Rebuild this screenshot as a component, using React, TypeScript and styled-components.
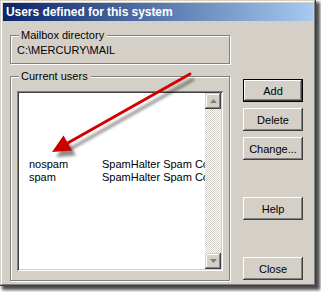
import React from "react";
import styled, { createGlobalStyle } from "styled-components";

const Global = createGlobalStyle`
  html, body { margin: 0; padding: 0; background: #ffffff; }
  body { font-family: "Liberation Sans", Arial, sans-serif; font-size: 11px; color: #000; }
`;

const Page = styled.div`
  position: relative;
  width: 321px;
  height: 292px;
  overflow: hidden;
`;

const Window = styled.div`
  position: relative;
  width: 316px;
  height: 286px;
  box-sizing: border-box;
  padding: 3px;
  background: #d4d0c8;
  box-shadow: inset -1px -1px #404040, inset 1px 1px #d4d0c8, inset -2px -2px #808080,
    inset 2px 2px #ffffff, 3px 3px 3px 1px rgba(0, 0, 0, 0.7);
  display: flex;
  flex-direction: column;
`;

const TitleBar = styled.div`
  height: 18px;
  line-height: 18px;
  padding-left: 3px;
  background: linear-gradient(to right, #0a246a, #a6caf0);
  color: #ffffff;
  font-weight: bold;
  font-size: 12px;
  letter-spacing: -0.05px;
  white-space: nowrap;
`;

const Body = styled.div`
  display: flex;
  flex-direction: row;
  padding-left: 7px;
`;

const LeftCol = styled.div`
  width: 221px;
  display: flex;
  flex-direction: column;
`;

const Group = styled.div<{ $h: number; $mt: number }>`
  position: relative;
  box-sizing: border-box;
  height: ${(p) => p.$h}px;
  margin-top: ${(p) => p.$mt}px;
  border: 1px solid #808080;
  box-shadow: inset 1px 1px #ffffff, 1px 1px #ffffff;
  width: 220px;
`;

const GroupLabel = styled.span`
  position: absolute;
  top: -7px;
  left: 8px;
  padding: 0 3px 0 2px;
  background: #d4d0c8;
  line-height: 13px;
`;

const MailboxValue = styled.div`
  padding: 8px 0 0 6px;
  line-height: 13px;
`;

const CurrentInner = styled.div`
  padding: 14px 0 0 6px;
`;

const ListBox = styled.div`
  box-sizing: border-box;
  width: 206px;
  height: 180px;
  padding: 2px;
  background: #ffffff;
  box-shadow: inset 1px 1px #808080, inset -1px -1px #ffffff, inset 2px 2px #404040,
    inset -2px -2px #d4d0c8;
  display: flex;
`;

const Items = styled.div`
  flex: 1;
  overflow: hidden;
  padding-top: 65px;
`;

const Row = styled.div`
  display: flex;
  height: 13px;
  line-height: 13px;
  white-space: nowrap;
`;

const NameCell = styled.span`
  width: 73px;
  padding-left: 10px;
  flex-shrink: 0;
`;

const DescCell = styled.span`
  overflow: hidden;
`;

const ScrollBar = styled.div`
  width: 16px;
  display: flex;
  flex-direction: column;
  justify-content: space-between;
  background: repeating-conic-gradient(#ffffff 0 25%, #d4d0c8 0 50%) 0 0 / 2px 2px;
`;

const ScrollBtn = styled.div`
  width: 16px;
  height: 16px;
  background: #d4d0c8;
  box-shadow: inset -1px -1px #404040, inset 1px 1px #d4d0c8, inset -2px -2px #808080,
    inset 2px 2px #ffffff;
  display: flex;
  align-items: center;
  justify-content: center;
`;

const RightCol = styled.div`
  display: flex;
  flex-direction: column;
  margin-left: 12px;
  padding-top: 58px;
`;

const Button = styled.button<{ $mt: number; $default?: boolean }>`
  box-sizing: border-box;
  width: 60px;
  height: 23px;
  margin-top: ${(p) => p.$mt}px;
  padding: 0;
  font-family: "Liberation Sans", Arial, sans-serif;
  font-size: 11px;
  color: #000;
  background: #d4d0c8;
  border: ${(p) => (p.$default ? "1px solid #000" : "none")};
  box-shadow: inset -1px -1px #404040, inset 1px 1px #ffffff, inset -2px -2px #808080,
    inset 2px 2px #d4d0c8;
`;

const ArrowLayer = styled.svg`
  position: absolute;
  left: 0;
  top: 0;
  pointer-events: none;
`;

const UpArrow = () => (
  <svg width="7" height="4" viewBox="0 0 7 4">
    <polygon points="3.5,0 7,4 0,4" fill="#808080" />
  </svg>
);
const DownArrow = () => (
  <svg width="7" height="4" viewBox="0 0 7 4">
    <polygon points="0,0 7,0 3.5,4" fill="#808080" />
  </svg>
);

export default function App() {
  return (
    <Page>
      <Global />
      <Window>
        <TitleBar>Users defined for this system</TitleBar>
        <Body>
          <LeftCol>
            <Group $h={29} $mt={14}>
              <GroupLabel>Mailbox directory</GroupLabel>
              <MailboxValue>C:\MERCURY\MAIL</MailboxValue>
            </Group>
            <Group $h={205} $mt={12}>
              <GroupLabel>Current users</GroupLabel>
              <CurrentInner>
                <ListBox>
                  <Items>
                    <Row>
                      <NameCell>nospam</NameCell>
                      <DescCell>SpamHalter Spam Control</DescCell>
                    </Row>
                    <Row>
                      <NameCell>spam</NameCell>
                      <DescCell>SpamHalter Spam Control</DescCell>
                    </Row>
                  </Items>
                  <ScrollBar>
                    <ScrollBtn>
                      <UpArrow />
                    </ScrollBtn>
                    <ScrollBtn>
                      <DownArrow />
                    </ScrollBtn>
                  </ScrollBar>
                </ListBox>
              </CurrentInner>
            </Group>
          </LeftCol>
          <RightCol>
            <Button $mt={0} $default>
              Add
            </Button>
            <Button $mt={6}>Delete</Button>
            <Button $mt={6}>Change...</Button>
            <Button $mt={37}>Help</Button>
            <Button $mt={37}>Close</Button>
          </RightCol>
        </Body>
      </Window>
      <ArrowLayer width="321" height="292" viewBox="0 0 321 292">
        <defs>
          <filter id="blur" x="-20%" y="-20%" width="140%" height="140%">
            <feGaussianBlur stdDeviation="1.6" />
          </filter>
        </defs>
        <g transform="translate(4,5)" fill="rgba(0,0,0,0.45)" stroke="rgba(0,0,0,0.45)" filter="url(#blur)">
          <line x1="190" y1="74" x2="66" y2="144" strokeWidth="3" />
          <polygon points="52,152 72,150.5 63.5,135.5" stroke="none" />
        </g>
        <line x1="190" y1="74" x2="66" y2="144" stroke="#d40000" strokeWidth="3" strokeLinecap="round" />
        <polygon points="52,152 72,150.5 63.5,135.5" fill="#c80000" />
      </ArrowLayer>
    </Page>
  );
}
